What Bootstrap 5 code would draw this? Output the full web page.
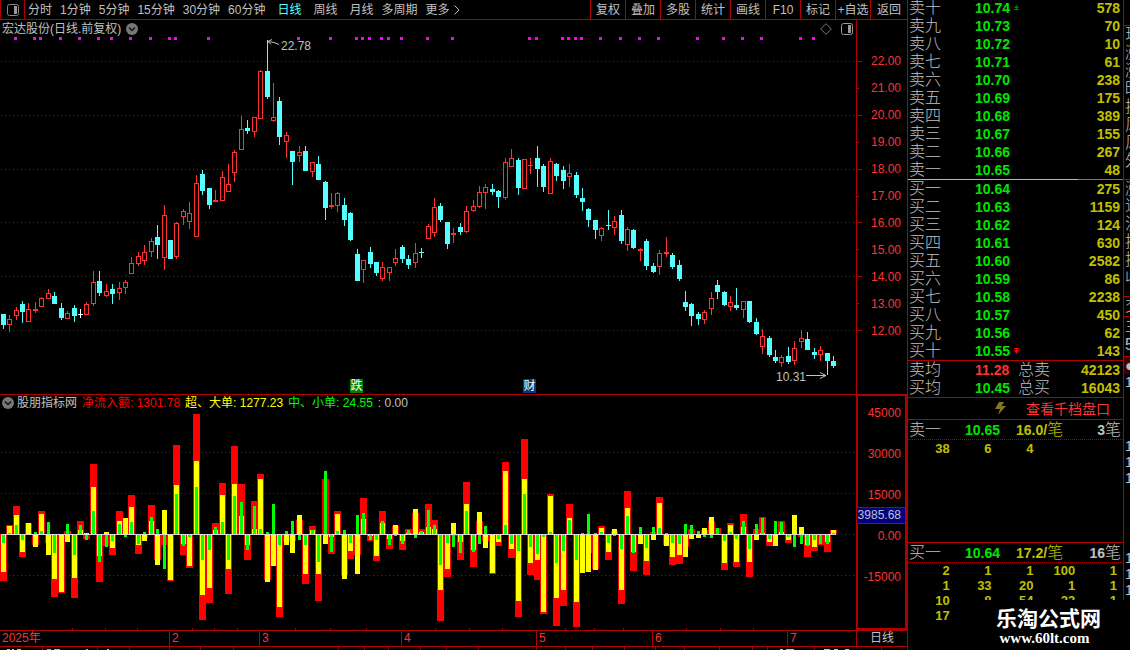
<!DOCTYPE html>
<html lang="zh-CN">
<head>
<meta charset="utf-8">
<meta name="viewport" content="width=device-width, initial-scale=1">
<title>宏达股份 日线</title>
<link href="https://cdn.jsdelivr.net/npm/bootstrap@5.3.0/dist/css/bootstrap.min.css" rel="stylesheet">
<style>
:root{--line:#b00000;--grey:#c0c0c0;--up:#ff3232;--down:#54ffff;--green:#00e600;--gold:#c0c000}
body{background:#000;color:var(--grey);font:12px/18px "Liberation Sans","Noto Sans CJK SC",sans-serif;overflow:hidden}
button{background:none;border:0;color:inherit;padding:0;font:inherit;white-space:nowrap}
svg{display:block}
.ln-b{border-bottom:1px solid var(--line)}
.ln-t{border-top:1px solid var(--line)}
.ln-l{border-left:1px solid var(--line)}
.num{font-size:12px}
.toolbar{height:20px}
.tabs{gap:8px;padding-left:3px}
.tabs .on{color:var(--down)}
.logo-cell{width:24px;border-right:1px solid var(--line)}
.tool{width:35px;border-left:1px solid var(--line)}
.tool:last-child{width:37px}
.price-pane{height:374px}
.flow-pane{height:236px}
.plot{min-width:0}
.plot>svg{width:100%;height:100%}
.axis{width:51px;color:var(--up)}
.axis-price{padding-top:28px;line-height:27px}
.axis-flow{border:2px solid var(--line);line-height:41px}
.axis .num{padding-right:6px}
.axis-flow .num{padding-right:4px}
.axis-flow .num:first-child{margin-top:-3px}
.now-tag{top:111px;left:-1px;right:0;height:17px;line-height:15px;background:#000080;color:var(--grey);border-top:1px solid var(--line);border-bottom:1px solid var(--line)}
.pane-head{top:0;left:2px;right:3px;height:18px;gap:5px}
.mark-tag{width:13px;height:14px;line-height:14px;color:#fff;text-align:center;bottom:1px}
.fall{background:#008000}.report{background:#003c78}
.note-high{top:17px;left:281px}
.note-low{top:348px;right:50px}
.time{height:16px;color:var(--up);line-height:15px}
.time>div{flex-basis:0;padding-left:2px;min-width:0}
.time>div+div{border-left:1px solid var(--line)}
.time .period{flex:none;width:51px;padding:0;color:var(--grey)}
.strip{height:4px}
.side{width:216px}
.book{width:100%;table-layout:fixed;border-collapse:collapse;font-size:14px}
.book td,.book th{height:18px;padding:0;line-height:18px;font-weight:bold;white-space:nowrap}
.book th{width:67px;padding-left:1px;font-size:16px;font-weight:300}
.book .px{width:43px;color:var(--green)}
.book .px svg{flex-shrink:0}
.book .qty{color:var(--gold);text-align:right;padding-right:3px}
.book .sum{font-size:16px;font-weight:300;width:40px}
.sell{margin-top:-1px}
.split{height:1px;background:linear-gradient(90deg,#f0b050 79%,#4080d0 79%)}
.link-row{height:22px;padding-right:13px}
.link-row a{color:var(--up);font-size:14px;text-decoration:none}
.link-row svg{margin-right:20px}
.lot-head{height:21px;border-bottom:1px dotted var(--line);font-size:14px;padding:0 2px 0 1px}
.lot-head .cjk{font-size:16px;font-weight:300}
.lot-head b:nth-child(2){width:51px;color:var(--green)}
.lot-head .nm{width:56px}
.gold{color:var(--gold)}
.lots{table-layout:fixed;border-collapse:collapse;color:var(--gold);font-size:13px;width:209px}
.lots td{padding:0;height:15px;line-height:15px;text-align:right;font-weight:bold}
.lots-a{height:102px;padding-top:1px}
.edge{width:7px;height:650px;font-size:16px;font-weight:300}
.edge div{height:18px;width:24px;padding-left:1px}
.edge .g-end{margin-bottom:9px}
.edge .tall{height:20px}
.edge .digit{font:14px/16px "Liberation Sans",sans-serif;height:16px}
.brand{left:57px;right:-7px;top:600px;height:50px;background:#000;color:#fff;font-size:21px;font-weight:bold;line-height:22px;padding:8px 0 0 2px}
.brand a{font:bold 15px/17px "Liberation Serif",serif;color:#fff;text-decoration:none}
</style>
</head>
<body>
<div class="d-flex">
<main class="flex-grow-1 plot">
  <nav class="toolbar ln-b ln-l d-flex">
    <div class="logo-cell d-flex align-items-center justify-content-center flex-shrink-0">
      <svg width="12" height="12" viewBox="0 0 12 12"><rect x=".5" y=".5" width="11" height="11" rx="2" fill="none" stroke="#888"/><path d="M7 2h3v8H7z" fill="#999"/></svg>
    </div>
    <div class="tabs d-flex flex-grow-1">
      <button>分时</button><button>1分钟</button><button>5分钟</button><button>15分钟</button><button>30分钟</button><button>60分钟</button><button class="on ms-1">日线</button><button class="ms-1">周线</button><button class="ms-1">月线</button><button>多周期</button>
      <button class="d-flex align-items-center gap-1">更多<svg width="6" height="10" viewBox="0 0 6 10"><path d="M.5.5 5 5 .5 9.500" fill="none" stroke="#c0c0c0"/></svg></button>
    </div>
    <div class="d-flex flex-shrink-0"><button class="tool">复权</button><button class="tool">叠加</button><button class="tool">多股</button><button class="tool">统计</button><button class="tool">画线</button><button class="tool">F10</button><button class="tool">标记</button><button class="tool">+自选</button><button class="tool">返回</button></div>
  </nav>

  <section class="price-pane d-flex">
    <div class="plot flex-grow-1 position-relative">
      <svg id="price" viewBox="0 20 856 374" preserveAspectRatio="none" shape-rendering="crispEdges"></svg>
      <div class="pane-head position-absolute d-flex align-items-center">
        <span>宏达股份(日线.前复权)</span>
        <svg width="12" height="12" viewBox="0 0 12 12"><circle cx="6" cy="6" r="6" fill="#777"/><path d="M3 4.500 6 7.500l3-3" fill="none" stroke="#111" stroke-width="1.500"/></svg>
        <svg class="ms-auto" width="12" height="12" viewBox="0 0 12 12"><path d="M6 .7 11.300 6 6 11.300.7 6z" fill="none" stroke="#777"/></svg>
        <svg class="ms-1" width="12" height="12" viewBox="0 0 12 12"><rect x=".5" y=".5" width="11" height="11" rx="2" fill="none" stroke="#999"/><path d="M7 2h3v8H7z" fill="#999"/></svg>
      </div>
      <span class="num note-high position-absolute">22.78</span>
      <span class="num note-low position-absolute">10.31</span>
      <span class="mark-tag fall position-absolute" style="left:40.9%">跌</span>
      <span class="mark-tag report position-absolute" style="left:61.1%">财</span>
    </div>
    <div class="axis axis-price ln-l position-relative flex-shrink-0 text-end" id="priceAxis"></div>
  </section>

  <section class="flow-pane d-flex">
    <div class="plot flex-grow-1 position-relative">
      <svg id="flow" viewBox="0 394 856 236" preserveAspectRatio="none" shape-rendering="crispEdges"></svg>
      <div class="pane-head position-absolute d-flex align-items-center">
        <svg width="12" height="12" viewBox="0 0 12 12"><circle cx="6" cy="6" r="6" fill="#777"/><path d="M3 4.500 6 7.500l3-3" fill="none" stroke="#111" stroke-width="1.500"/></svg>
        <span style="margin-left:-2px">股朋指标网</span>
        <span style="color:#f00">净流入额: 1301.78</span>
        <span style="color:#ff0">超、大单: 1277.23</span>
        <span style="color:#0f0">中、小单: 24.55</span>
        <span>: 0.00</span>
      </div>
    </div>
    <div class="axis axis-flow position-relative flex-shrink-0 text-end">
      <div class="num">45000</div><div class="num">30000</div><div class="num">15000</div><div class="num">0.00</div><div class="num">-15000</div>
      <div class="num now-tag position-absolute">3985.68</div>
    </div>
  </section>

  <footer>
    <div class="time ln-t d-flex num">
      <div style="flex-grow:167">2025年</div><div style="flex-grow:87">2</div><div style="flex-grow:139">3</div><div style="flex-grow:132">4</div><div style="flex-grow:113">5</div><div style="flex-grow:132">6</div><div style="flex-grow:66">7</div>
      <div class="period text-center">日线</div>
    </div>
    <div class="strip ln-t"><svg id="strip" width="100%" height="3" viewBox="0 647 907 3" preserveAspectRatio="none" shape-rendering="crispEdges"></svg></div>
  </footer>
</main>

<aside class="side ln-l position-relative flex-shrink-0">
  <div class="overflow-hidden"><table class="book sell" id="sell"></table></div>
  <div class="split"></div>
  <table class="book" id="buy"></table>
  <table class="book ln-t">
    <tr><th>卖均</th><td class="px" style="color:var(--up)">11.28</td><td class="sum">总卖</td><td class="qty">42123</td></tr>
    <tr><th>买均</th><td class="px">10.45</td><td class="sum">总买</td><td class="qty">16043</td></tr>
  </table>
  <div class="link-row ln-t d-flex align-items-center justify-content-end">
    <svg width="12" height="13" viewBox="0 0 12 13"><path d="M5 0h5L7.500 4H12L4 13l2-6H1z" fill="#857520"/></svg>
    <a href="#">查看千档盘口</a>
  </div>
  <div class="lot-head ln-t d-flex align-items-center"><span class="cjk nm">卖一</span><b>10.65</b><b class="gold">16.0/</b><span class="cjk gold">笔</span><b class="ms-auto">3</b><span class="cjk">笔</span></div>
  <div class="lots-a"><table class="lots"><tr><td>38</td><td>6</td><td>4</td><td></td><td></td></tr></table></div>
  <div class="lot-head ln-t d-flex align-items-center"><span class="cjk nm">买一</span><b>10.64</b><b class="gold">17.2/</b><span class="cjk gold">笔</span><b class="ms-auto">16</b><span class="cjk">笔</span></div>
  <table class="lots">
    <tr><td>2</td><td>1</td><td>1</td><td>100</td><td>1</td></tr>
    <tr><td>1</td><td>33</td><td>20</td><td>1</td><td>1</td></tr>
    <tr><td>10</td><td>8</td><td>54</td><td>23</td><td>1</td></tr>
    <tr><td>17</td><td></td><td></td><td></td><td></td></tr>
  </table>
  <div class="brand position-absolute text-center">乐淘公式网<br><a href="#" class="d-block pe-2">www.60lt.com</a></div>
</aside>
<div class="edge ln-l overflow-hidden flex-shrink-0">
  <div class="ln-b" style="height:26px"></div>
  <div>现</div><div>涨</div><div>涨</div><div>昨</div><div>换</div><div>风</div><div>风</div><div class="g-end">外</div>
  <div class="ln-t">涨</div><div>速</div><div>流</div><div>换</div><div>换</div><div class="g-end">收</div>
  <div class="ln-t tall">交</div><div class="ln-t tall">主</div><div class="tall">5</div>
  <div class="ln-t" style="background:#400000">●</div><div class="digit">1</div>
  <div style="height:48px"></div>
  <div class="digit">1</div><div class="digit">1</div><div class="digit">1</div><div style="height:64px"></div><div class="digit">1</div><div class="digit">1</div><div class="digit">1</div>
</div>
</div>

<script>
const RED='#ff3232',CYAN='#54ffff',LINE='#b00000';
const rect=(x,y,w,h,f)=>`<rect x="${x}" y="${y}" width="${w}" height="${h}" fill="${f}"/>`;
const dots=y=>`<path d="M1 ${y+.5}H856" stroke="${LINE}" stroke-dasharray="1 3"/>`;

// x, high, low, body top, body bottom, r = rising, c = falling, w = flat
const candles=`3 314 329 314 325 c;9 315 332 319 325 r;16 307 320 310 316 r;22 301 323 304 312 c;28 303 322 309 322 r;35 302 313 309 311 r;41 297 307 298 307 r;48 289 299 293 299 r;54 292 304 296 304 c;61 303 320 308 318 c;67 311 319 313 319 r;74 305 322 308 316 c;80 309 318 314 315 w;86 302 315 304 315 r;93 271 306 282 304 r;99 271 296 281 293 c;106 284 297 291 296 r;112 284 304 289 294 c;119 282 300 288 293 r;125 280 294 282 288 r;131 257 274 263 274 r;138 252 266 256 264 r;144 245 265 252 261 r;151 238 257 241 252 r;157 225 259 237 245 c;164 205 270 215 258 r;170 240 259 240 259 c;176 222 259 223 257 r;183 209 225 211 217 r;189 202 229 213 222 r;196 175 237 183 237 r;202 170 195 174 191 c;209 188 209 188 205 c;215 190 202 200 202 r;222 171 201 177 201 r;228 164 192 184 192 r;234 150 182 152 173 r;241 116 150 129 150 r;247 120 134 128 131 c;254 117 137 117 132 r;260 70 119 71 119 r;267 40 99 71 97 c;273 83 122 117 121 r;279 97 145 101 137 c;286 132 158 135 142 r;292 151 185 151 162 c;299 146 162 152 156 r;305 146 171 151 171 c;312 162 177 162 172 r;318 156 180 164 180 c;325 181 220 182 208 c;331 193 209 205 207 r;337 192 212 193 206 r;344 198 226 205 220 c;350 212 241 213 240 c;357 249 281 254 281 c;363 260 283 260 270 r;370 247 268 252 264 c;376 262 276 262 273 c;382 262 281 267 279 r;389 267 281 267 273 r;395 249 266 258 263 r;402 245 263 247 259 c;408 255 269 259 265 c;415 243 268 253 263 r;421 248 258 252 253 c;428 224 239 226 239 r;434 198 237 207 233 r;440 203 222 206 220 c;447 222 249 222 244 c;453 228 243 233 235 r;460 223 235 227 232 c;466 206 233 211 232 r;473 200 212 206 211 r;479 186 208 192 207 r;485 184 209 187 193 r;492 184 195 189 192 c;498 190 208 191 197 c;505 158 200 162 198 r;511 149 167 158 167 r;518 158 195 160 188 c;524 159 189 159 189 r;530 158 174 165 166 r;537 146 187 158 169 c;543 164 192 166 187 c;550 158 194 161 194 r;556 163 181 164 176 c;563 166 189 170 181 c;569 164 187 173 177 r;576 172 198 175 195 c;582 188 211 198 202 c;588 208 227 209 220 c;595 220 239 220 230 c;601 227 241 228 236 r;608 210 230 225 226 c;614 216 235 221 228 r;621 210 244 215 241 c;627 227 251 229 245 r;633 229 249 230 248 c;640 248 261 249 251 r;646 239 270 241 266 c;653 263 273 266 272 c;659 250 275 253 267 r;666 237 257 252 254 r;672 253 269 255 267 c;679 260 281 265 279 c;685 291 311 302 307 c;691 303 326 304 316 c;698 312 325 314 319 c;704 310 324 312 320 r;711 292 315 298 309 r;717 280 299 285 292 c;724 291 306 292 305 c;730 296 311 302 307 r;736 288 310 305 308 c;743 301 318 301 310 r;749 301 323 301 322 c;756 318 335 322 334 c;762 329 354 336 347 r;769 336 357 338 355 c;775 350 363 357 361 c;781 355 367 357 363 r;788 347 364 356 362 c;794 341 365 348 361 r;801 330 348 338 342 r;807 332 350 339 350 c;814 348 359 352 355 c;820 346 361 350 355 r;827 353 375 353 361 c;833 356 368 361 366 c`;
let p='';
[61,115,169,222,276,330].forEach(y=>p+=dots(y));
[15,34,40,60,79,98,111,130,150,169,175,208,298,330,356,362,369,381,388,401,427,452,529,536,562,568,575,581,600,620,639,658,697,723,742,761,800,813].forEach(x=>p+=rect(x-1,37,3,3,'#f0f'));
candles.split(';').forEach(s=>{
  let [x,h,l,t,b,k]=s.split(' ');x=+x;h=+h;l=+l;t=+t;b=+b;
  const c=k=='r'?RED:k=='c'?CYAN:'#fff';
  p+=rect(x,h,1,l-h,c)+rect(x-2,t,5,b-t,c);
  if(k=='r'&&b-t>2)p+=rect(x-1,t+1,3,b-t-2,'#000');
});
p+='<g fill="none" stroke="#c0c0c0" shape-rendering="auto"><path d="M268 41.500l6 1 5 2M272 39.500l-4 2 3 3"/><path d="M806 375.500h20M820 372.500l6 3-6 3"/></g>';
price.innerHTML=p;

// x, end of the net, large-order and small-order bars; 534 is the zero line
const flows=`3 581 572 543;9 525 526 533;16 506 515 525;22 557 552 540;28 523 523 534;35 545 547 532;41 511 514 531;48 543 555 522;54 597 579 553;61 593 592 534;67 531 542 524;74 598 578 555;80 521 530 525;86 539 533 540;93 464 487 511;99 582 556 562;106 546 532 547;112 555 548 541;119 511 521 524;125 524 518 537;131 495 507 522;138 554 545 544;144 538 541 532;151 505 521 517;157 560 565 529;164 545 510 569;170 581 580 534;176 445 485 494;183 555 544 546;189 568 566 537;196 414 461 487;202 620 595 560;209 603 588 550;215 523 530 527;222 483 495 522;228 594 569 560;234 446 484 496;241 484 516 502;247 560 545 550;254 501 529 506;260 474 479 529;267 580 582 532;273 534 566 504;279 617 607 545;286 542 545 531;292 541 553 521;299 520 515 540;305 584 574 545;312 526 530 530;318 601 574 562;325 479 544 471;331 554 537 552;337 511 514 531;344 575 579 530;350 559 551 543;357 555 574 515;363 498 519 513;370 541 536 540;376 561 556 540;382 511 523 521;389 549 539 545;395 526 525 536;402 550 541 544;408 529 533 530;415 513 509 538;421 529 532 531;428 504 527 510;434 520 529 525;440 621 590 565;447 577 569 543;453 536 523 547;460 560 542 553;466 482 504 511;473 567 550 552;479 521 512 544;485 541 548 526;492 574 573 534;498 546 542 539;505 462 471 525;511 558 549 544;518 617 601 551;524 439 479 494;530 575 563 547;537 580 560 554;543 614 612 537;550 494 496 532;556 626 598 563;563 606 590 551;569 504 518 520;576 627 602 560;582 572 573 533;588 553 572 514;595 569 570 533;601 526 528 532;608 560 552 543;614 531 529 536;621 604 590 549;627 491 508 516;633 571 552 553;640 536 544 527;646 575 561 548;653 532 540 527;659 497 503 528;666 545 546 533;672 565 557 543;679 564 555 544;685 547 557 524;691 529 539 525;698 534 538 531;704 530 528 537;711 521 517 538;717 528 534 528;724 570 563 541;730 523 525 532;736 567 562 539;743 514 527 521;749 577 562 549;756 529 540 524;762 517 533 518;769 546 542 539;775 534 546 521;781 521 532 522;788 543 540 537;794 534 515 547;801 537 527 544;807 557 545 546;814 551 547 540;820 545 534 544;827 552 542 544;833 530 530 533`.split(';').map(s=>s.split(' ').map(Number));
let f='';
[452,493,575].forEach(y=>f+=dots(y));
[['#f00',3,1],['#ff0',2,2],['#0f0',1,3]].forEach(([c,w,i])=>flows.forEach(r=>{
  const y=r[i];if(y!=534)f+=rect(r[0]-w,Math.min(y,534),w*2+1,Math.abs(y-534),c);
}));
f+=dots(534)+rect(1,534,835,1,'#d8d8d8')+rect(0,394,856,1,LINE);
[72,105,137,192,214,237,295,330,366,435,469,502,565,594,623,686,720,753].forEach(x=>f+=rect(x,628,1,2,LINE));
flow.innerHTML=f;

let a='<svg class="position-absolute top-0 start-0" width="6" height="374" viewBox="0 20 6 374" shape-rendering="crispEdges">';
for(let i=0;i<11;i++)a+=rect(0,61+i*27-(i>5),i%2?2:5,1,LINE);
a+='</svg>';
for(let v=22;v>=12;v--)a+=`<div class="num">${v}.00</div>`;
priceAxis.innerHTML=a;
strip.innerHTML=[42,97,129,169,200,233,338,364,388,420,446,478,536,565,592,624,655,684,719,752,767,814,881].map(x=>rect(x,647,1,3,LINE)).join('')+[[7,3,'#c0c0c0'],[12,2,'#c0c0c0'],[17,4,'#c0c0c0'],[47,4,'#c0c000'],[54,6,'#c0c000'],[86,2,'#c0c000'],[107,2,'#c0c0c0'],[780,3,'#c0c0c0'],[786,8,'#c0c0c0'],[824,6,'#c0c0c0'],[834,4,'#c0c0c0'],[845,4,'#c0c0c0']].map(([x,w,c])=>rect(x,649,w,1,c)).join('');

const cn='一二三四五六七八九十',row=(n,i,px,q,m='')=>`<tr><th>${n}${cn[i]}</th><td class="px"><span class="d-flex align-items-center gap-1">${px}${m}</span></td><td class="qty">${q}</td></tr>`;
const upMark='<svg width="5" height="6" viewBox="0 0 5 6"><path d="M2.500 0 5 3H3v1h2v1H0V4h2V3H0z" fill="#008000"/></svg>';
const dnMark='<svg width="5" height="6" viewBox="0 0 5 6"><path d="M0 0h5v1H3v1h2L2.500 6 0 2h2V1H0z" fill="#f00"/></svg>';
sell.innerHTML=[578,70,10,61,238,175,389,155,267,48].map((q,i)=>row('卖',9-i,(10.74-i/100).toFixed(2),q,i?'':upMark)).join('');
buy.innerHTML=[275,1159,124,630,2582,86,2238,450,62,143].map((q,i)=>row('买',i,(10.64-i/100).toFixed(2),q,i==9?dnMark:'')).join('');
</script>
<script src="https://cdn.jsdelivr.net/npm/bootstrap@5.3.0/dist/js/bootstrap.bundle.min.js"></script>
</body>
</html>
